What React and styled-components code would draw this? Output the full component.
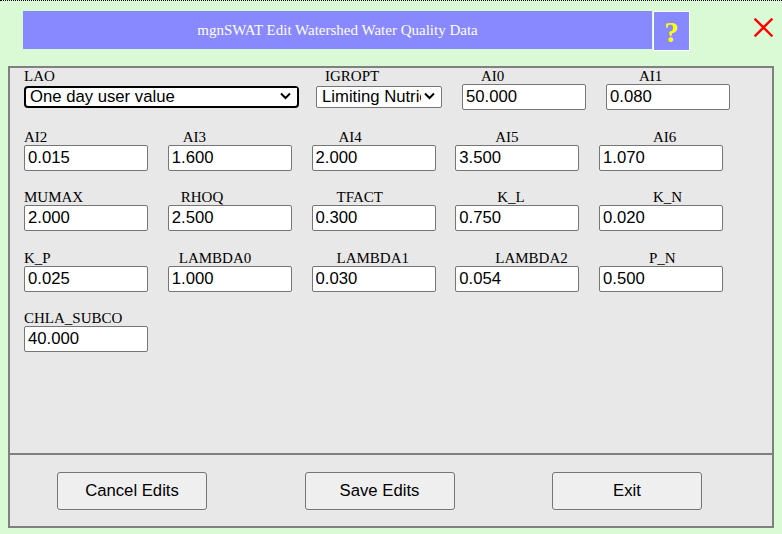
import React from "react";
import styled, { createGlobalStyle } from "styled-components";

const GlobalStyle = createGlobalStyle`
  html, body {
    margin: 0;
    padding: 0;
    background: #dafad6;
  }
  body {
    font-family: "Liberation Serif", "Times New Roman", serif;
  }
`;

export const Page = styled.div`
  width: 782px;
  height: 534px;
  box-sizing: border-box;
  border-top: 1px dotted #000000;
  background: #dafad6;
  overflow: hidden;
`;

export const Header = styled.div`
  display: flex;
  align-items: flex-start;
  margin-top: 10px;
  padding-left: 23px;
  height: 38px;
`;

export const TitleBar = styled.div`
  width: 629px;
  height: 38px;
  background: #8888ff;
  color: #ffffff;
  font-family: "Liberation Serif", "Times New Roman", serif;
  font-size: 15px;
  display: flex;
  align-items: center;
  justify-content: center;
`;

export const HelpBox = styled.div`
  width: 35px;
  height: 36px;
  margin-left: 1px;
  background: #8888ff;
  border: 1px solid #ffffff;
  color: #ffff00;
  font-family: "Liberation Serif", "Times New Roman", serif;
  font-weight: bold;
  font-size: 29px;
  display: flex;
  align-items: center;
  justify-content: center;
  padding-top: 2px;
  box-sizing: content-box;
`;

export const CloseButton = styled.div`
  margin-left: 64px;
  margin-top: 7px;
  width: 19px;
  height: 19px;
  cursor: pointer;
`;

export const Panel = styled.div`
  margin: 17px 0 0 8px;
  width: 766px;
  height: 462px;
  box-sizing: border-box;
  border: 2px solid #808080;
  background: #e8e8e8;
  display: flex;
  flex-direction: column;
`;

export const Form = styled.div`
  flex: 1;
  display: flex;
  flex-direction: column;
  gap: 18.5px;
  padding: 0 0 0 14px;
`;

export const TopRow = styled.div`
  display: flex;
  align-items: flex-end;
`;

export const Grid = styled.div`
  display: grid;
  grid-template-columns: repeat(5, 124px);
  column-gap: 19.75px;
`;

export const Field = styled.div`
  display: flex;
  flex-direction: column;
  width: ${(p) => p.$width || 124}px;
  margin-left: ${(p) => p.$gap || 0}px;
`;

export const Label = styled.div`
  height: 16px;
  line-height: 16px;
  font-family: "Liberation Serif", "Times New Roman", serif;
  font-size: 15px;
  color: #000000;
  padding-left: ${(p) => p.$indent || 0}px;
  white-space: nowrap;
`;

export const Control = styled.div`
  position: relative;
  height: 26px;
  display: flex;
  align-items: center;
`;

export const Input = styled.input`
  width: 100%;
  height: 26px;
  box-sizing: border-box;
  margin: 0;
  border: 1px solid #767676;
  border-radius: 2px;
  padding: 1px 3px;
  background: #ffffff;
  font-family: "Liberation Sans", Arial, sans-serif;
  font-size: 16.7px;
  color: #000000;
  outline: none;
`;

export const Select = styled.select`
  appearance: none;
  -webkit-appearance: none;
  width: 100%;
  height: 22px;
  box-sizing: border-box;
  margin: 0;
  padding: 0 20px 0 ${(p) => (p.$focused ? 4 : 5)}px;
  border: ${(p) => (p.$focused ? "2px solid #000000" : "1px solid #767676")};
  border-radius: ${(p) => (p.$focused ? 4 : 2)}px;
  background: #ffffff;
  font-family: "Liberation Sans", Arial, sans-serif;
  font-size: 16.7px;
  line-height: 18px;
  color: #000000;
  outline: none;
  overflow: hidden;
  white-space: nowrap;
`;

/* arrow of the select; its white box hides the clipped end of the text */
export const Chevron = styled.svg`
  position: absolute;
  right: ${(p) => p.$right}px;
  top: 4px;
  pointer-events: none;
`;

export const ButtonBar = styled.div`
  height: 73px;
  box-sizing: border-box;
  border-top: 2px solid #808080;
  display: flex;
  align-items: flex-start;
  padding: 17px 0 0 47px;
  gap: 97.5px;
`;

export const Button = styled.button`
  width: 150px;
  height: 38px;
  margin: 0;
  background: #efefef;
  border: 1px solid #767676;
  border-radius: 3px;
  font-family: "Liberation Sans", Arial, sans-serif;
  font-size: 16.7px;
  color: #000000;
  cursor: pointer;
`;

const CloseIcon = () => (
  <svg width="19" height="19" viewBox="0 0 19 19">
    <path d="M1.5 1.5 L17.5 17.5 M17.5 1.5 L1.5 17.5" stroke="#ff0000" strokeWidth="2.4" strokeLinecap="square" fill="none" />
  </svg>
);

const ChevronIcon = ({ right, width }) => {
  const c = width - 11.5;
  return (
    <Chevron $right={right} width={width} height="16" viewBox={`0 0 ${width} 16`}>
      <rect x="0" y="0" width={width} height="16" fill="#ffffff" />
      <path d={`M${c - 4.5} 5.5 L${c} 10 L${c + 4.5} 5.5`} stroke="#000000" strokeWidth="2" fill="none" />
    </Chevron>
  );
};

const gridFields = [
  [
    { name: "AI2", value: "0.015", indent: 0 },
    { name: "AI3", value: "1.600", indent: 15 },
    { name: "AI4", value: "2.000", indent: 27 },
    { name: "AI5", value: "3.500", indent: 40 },
    { name: "AI6", value: "1.070", indent: 54 },
  ],
  [
    { name: "MUMAX", value: "2.000", indent: 0 },
    { name: "RHOQ", value: "2.500", indent: 13 },
    { name: "TFACT", value: "0.300", indent: 25 },
    { name: "K_L", value: "0.750", indent: 42 },
    { name: "K_N", value: "0.020", indent: 54 },
  ],
  [
    { name: "K_P", value: "0.025", indent: 0 },
    { name: "LAMBDA0", value: "1.000", indent: 11 },
    { name: "LAMBDA1", value: "0.030", indent: 25 },
    { name: "LAMBDA2", value: "0.054", indent: 40 },
    { name: "P_N", value: "0.500", indent: 50 },
  ],
  [{ name: "CHLA_SUBCO", value: "40.000", indent: 0 }],
];

export default function App() {
  return (
    <Page>
      <GlobalStyle />
      <Header>
        <TitleBar>mgnSWAT Edit Watershed Water Quality Data</TitleBar>
        <HelpBox>?</HelpBox>
        <CloseButton>
          <CloseIcon />
        </CloseButton>
      </Header>

      <Panel>
        <Form>
          <TopRow>
            <Field $width={275}>
              <Label>LAO</Label>
              <Control>
                <Select $focused defaultValue="one">
                  <option value="one">One day user value</option>
                </Select>
                <ChevronIcon right={2} width={18} />
              </Control>
            </Field>
            <Field $width={126} $gap={17}>
              <Label $indent={9}>IGROPT</Label>
              <Control>
                <Select defaultValue="lim">
                  <option value="lim">Limiting Nutrient</option>
                </Select>
                <ChevronIcon right={1} width={20} />
              </Control>
            </Field>
            <Field $gap={20}>
              <Label $indent={19}>AI0</Label>
              <Control>
                <Input type="text" defaultValue="50.000" />
              </Control>
            </Field>
            <Field $gap={20}>
              <Label $indent={33}>AI1</Label>
              <Control>
                <Input type="text" defaultValue="0.080" />
              </Control>
            </Field>
          </TopRow>

          {gridFields.map((row, i) => (
            <Grid key={i}>
              {row.map((f) => (
                <Field key={f.name}>
                  <Label $indent={f.indent}>{f.name}</Label>
                  <Input type="text" defaultValue={f.value} />
                </Field>
              ))}
            </Grid>
          ))}
        </Form>

        <ButtonBar>
          <Button>Cancel Edits</Button>
          <Button>Save Edits</Button>
          <Button>Exit</Button>
        </ButtonBar>
      </Panel>
    </Page>
  );
}
